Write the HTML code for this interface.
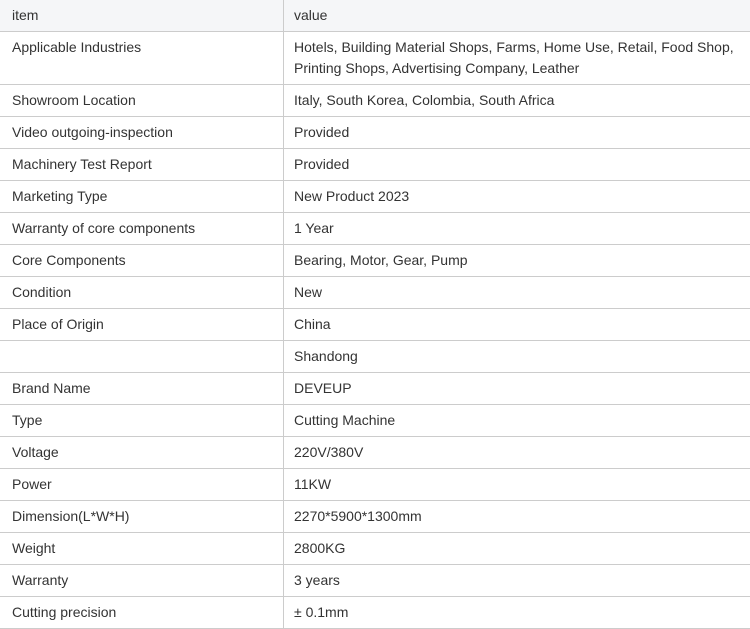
<!DOCTYPE html><html><head><style>
body{margin:0;background:#fff;font-family:"Liberation Sans",Arial,sans-serif;font-size:14px;color:#333}
.r{position:absolute;left:0;width:750px;border-bottom:1px solid #ccc;box-sizing:border-box}
.r div{position:absolute;top:0;line-height:21px}
.a{left:12px}.b{left:294px}
.v{position:absolute;left:283px;top:0;width:1px;height:628px;background:#ccc}
</style></head><body>
<div class="r" style="top:0;height:32px;background:#f5f6f8"><div class="a" style="top:5px">item</div><div class="b" style="top:5px">value</div></div>
<div class="r" style="top:32px;height:53px"><div class="a" style="top:5px">Applicable Industries</div><div class="b" style="top:5px">Hotels, Building Material Shops, Farms, Home Use, Retail, Food Shop,<br>Printing Shops, Advertising Company, Leather</div></div>
<div id="rows"></div>
<div class="v"></div>
<script>
var d=[["Showroom Location","Italy, South Korea, Colombia, South Africa"],["Video outgoing-inspection","Provided"],["Machinery Test Report","Provided"],["Marketing Type","New Product 2023"],["Warranty of core components","1 Year"],["Core Components","Bearing, Motor, Gear, Pump"],["Condition","New"],["Place of Origin","China"],["","Shandong"],["Brand Name","DEVEUP"],["Type","Cutting Machine"],["Voltage","220V/380V"],["Power","11KW"],["Dimension(L*W*H)","2270*5900*1300mm"],["Weight","2800KG"],["Warranty","3 years"],["Cutting precision","± 0.1mm"]];
var h="";d.forEach(function(x,i){h+='<div class="r" style="top:'+(85+i*32)+'px;height:32px"><div class="a" style="top:5px">'+x[0]+'</div><div class="b" style="top:5px">'+x[1]+'</div></div>';});
document.getElementById("rows").outerHTML=h;
</script>
</body></html>
